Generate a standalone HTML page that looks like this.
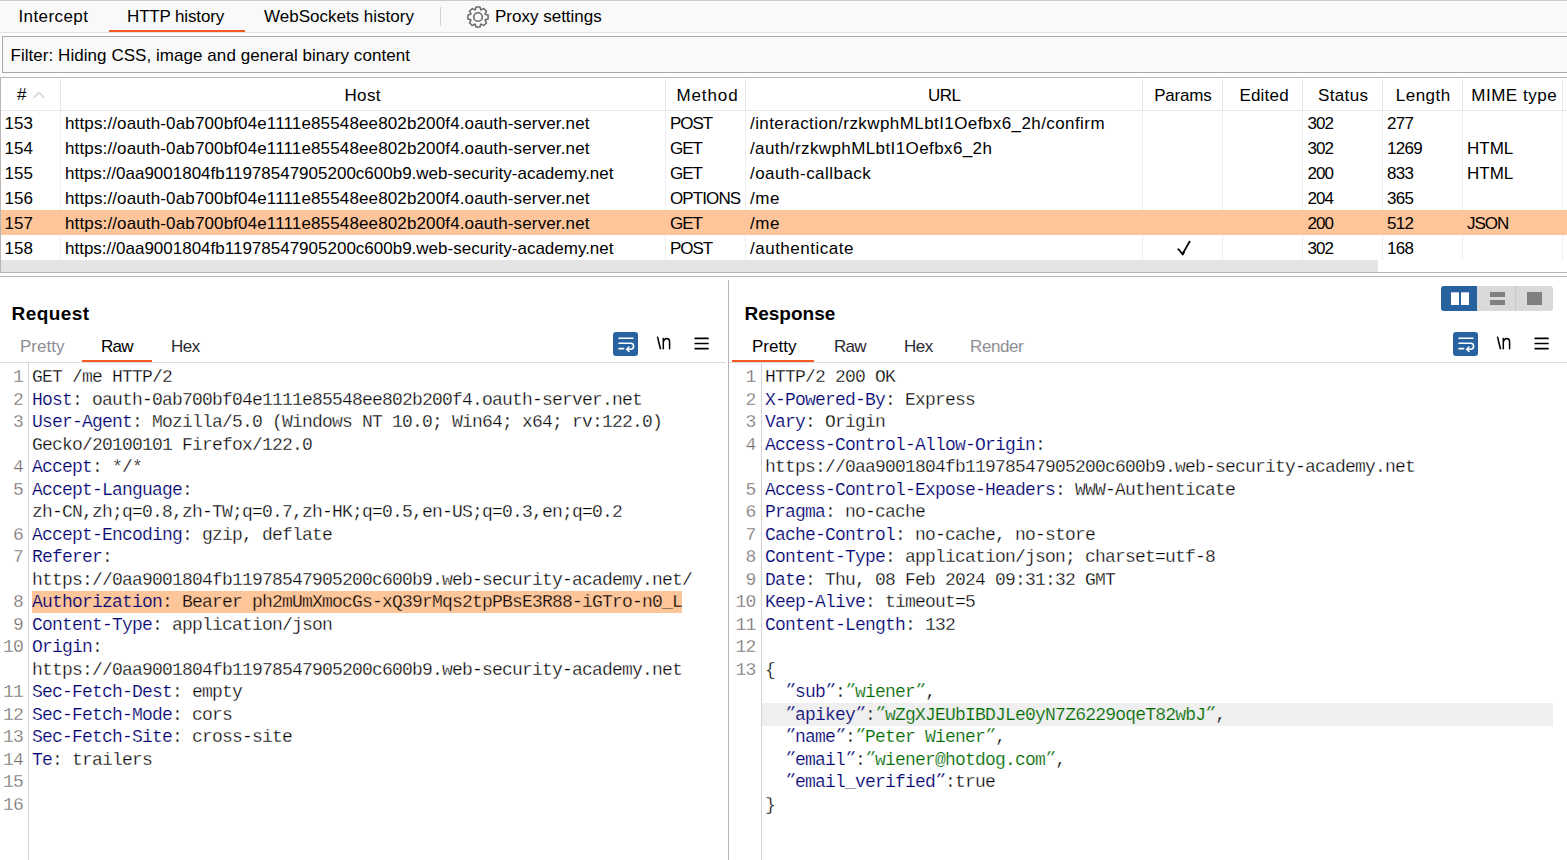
<!DOCTYPE html>
<html><head><meta charset="utf-8"><style>
*{margin:0;padding:0;box-sizing:border-box}
html,body{width:1567px;height:860px;overflow:hidden;background:#fff}
body{position:relative;font-family:"Liberation Sans",sans-serif;font-size:17px;color:#000}
.a{position:absolute;white-space:pre}
.c{position:absolute;white-space:pre;line-height:25px;height:25px}
.hl{position:absolute;background:#b9b5b5}
.vd{position:absolute;width:1px;background:#efefef}
.code{position:absolute;font-family:"Liberation Mono",monospace;font-size:18px;letter-spacing:-0.8px;line-height:22.5px;white-space:pre;color:#000;-webkit-text-stroke:0.3px #fff}
.ln{position:absolute;font-family:"Liberation Mono",monospace;font-size:18px;letter-spacing:-0.8px;-webkit-text-stroke:0.3px #fff;line-height:22.5px;white-space:pre;color:#6f6a6a;text-align:right}
.k{color:#000070;-webkit-text-stroke-width:0.2px}
.g{color:#006a00;-webkit-text-stroke-width:0.2px}
.q{font-style:normal;display:inline-block;transform:translateY(-1.5px) skewX(-28deg) scaleY(0.75);transform-origin:50% 30%}
</style></head><body>
<div class="a" style="left:0;top:0;width:1567px;height:33px;background:#f9f9f9;border-top:1px solid #c9cccc;border-bottom:1px solid #e2e2e2"></div>
<div class="a" style="left:18.5px;top:1px;line-height:31px;letter-spacing:0.4px">Intercept</div>
<div class="a" style="left:127px;top:1px;line-height:31px;letter-spacing:-0.15px">HTTP history</div>
<div class="a" style="left:108.5px;top:30px;width:136px;height:2px;background:#f85a26"></div>
<div class="a" style="left:264px;top:1px;line-height:31px">WebSockets history</div>
<div class="a" style="left:440px;top:7px;width:1px;height:19px;background:#d4d4d4"></div>
<svg class="a" style="left:465.75px;top:5px" width="24" height="24" viewBox="0 0 24 24"><path d="M9.24,4.81 L10.03,1.89 L13.97,1.89 L14.76,4.81 L15.13,4.97 L17.76,3.46 L20.54,6.24 L19.03,8.87 L19.19,9.24 L22.11,10.03 L22.11,13.97 L19.19,14.76 L19.03,15.13 L20.54,17.76 L17.76,20.54 L15.13,19.03 L14.76,19.19 L13.97,22.11 L10.03,22.11 L9.24,19.19 L8.87,19.03 L6.24,20.54 L3.46,17.76 L4.97,15.13 L4.81,14.76 L1.89,13.97 L1.89,10.03 L4.81,9.24 L4.97,8.87 L3.46,6.24 L6.24,3.46 L8.87,4.97 Z" fill="none" stroke="#6b6b6b" stroke-width="1.5" stroke-linejoin="round"/><circle cx="12" cy="12" r="4.3" fill="none" stroke="#6b6b6b" stroke-width="1.6"/></svg>
<div class="a" style="left:495px;top:1px;line-height:31px">Proxy settings</div>
<div class="a" style="left:0;top:33px;width:1567px;height:44px;background:#fcfcfc"></div>
<div class="a" style="left:2px;top:36px;width:1580px;height:37px;background:#f9f9f9;border:1px solid #a8a8a8"></div>
<div class="a" style="left:10.5px;top:38px;line-height:35px;letter-spacing:0.05px">Filter: Hiding CSS, image and general binary content</div>
<div class="hl" style="left:0;top:77px;width:1567px;height:1px"></div>
<div class="a" style="left:0;top:78px;width:1567px;height:194px;background:#fff"></div>
<div class="hl" style="left:0;top:77px;width:1px;height:196px"></div>
<div class="vd" style="left:60px;top:79px;height:31px;background:#e6e6e6"></div>
<div class="vd" style="left:665px;top:79px;height:31px;background:#e6e6e6"></div>
<div class="vd" style="left:745px;top:79px;height:31px;background:#e6e6e6"></div>
<div class="vd" style="left:1142px;top:79px;height:31px;background:#e6e6e6"></div>
<div class="vd" style="left:1222px;top:79px;height:31px;background:#e6e6e6"></div>
<div class="vd" style="left:1302px;top:79px;height:31px;background:#e6e6e6"></div>
<div class="vd" style="left:1382px;top:79px;height:31px;background:#e6e6e6"></div>
<div class="vd" style="left:1462px;top:79px;height:31px;background:#e6e6e6"></div>
<div class="vd" style="left:1562px;top:79px;height:31px;background:#e6e6e6"></div>
<div class="a" style="left:1px;top:110px;width:1566px;height:1px;background:#e6e6e6"></div>
<div class="a" style="left:17px;top:79px;line-height:32px">#</div>
<svg class="a" style="left:32px;top:90px" width="14" height="10" viewBox="0 0 14 10"><path d="M1.5,8 L7,2.5 L12.5,8" fill="none" stroke="#a8a8a8" stroke-width="1"/></svg>
<div class="a" style="left:60px;top:80px;width:605px;line-height:32px;text-align:center;letter-spacing:0.4px;text-indent:0.4px">Host</div>
<div class="a" style="left:667px;top:80px;width:80px;line-height:32px;text-align:center;letter-spacing:0.9px;text-indent:0.9px">Method</div>
<div class="a" style="left:746px;top:80px;width:397px;line-height:32px;text-align:center;letter-spacing:-0.5px;text-indent:-0.5px">URL</div>
<div class="a" style="left:1143px;top:80px;width:80px;line-height:32px;text-align:center;letter-spacing:-0.2px;text-indent:-0.2px">Params</div>
<div class="a" style="left:1224px;top:80px;width:80px;line-height:32px;text-align:center;letter-spacing:0.2px;text-indent:0.2px">Edited</div>
<div class="a" style="left:1303px;top:80px;width:80px;line-height:32px;text-align:center;letter-spacing:0.35px;text-indent:0.35px">Status</div>
<div class="a" style="left:1383px;top:80px;width:80px;line-height:32px;text-align:center;letter-spacing:0.5px;text-indent:0.5px">Length</div>
<div class="a" style="left:1464px;top:80px;width:100px;line-height:32px;text-align:center;letter-spacing:0.55px;text-indent:0.55px">MIME type</div>
<div class="vd" style="left:60px;top:111px;height:149px"></div>
<div class="vd" style="left:665px;top:111px;height:149px"></div>
<div class="vd" style="left:745px;top:111px;height:149px"></div>
<div class="vd" style="left:1142px;top:111px;height:149px"></div>
<div class="vd" style="left:1222px;top:111px;height:149px"></div>
<div class="vd" style="left:1302px;top:111px;height:149px"></div>
<div class="vd" style="left:1382px;top:111px;height:149px"></div>
<div class="vd" style="left:1462px;top:111px;height:149px"></div>
<div class="vd" style="left:1562px;top:111px;height:149px"></div>
<div class="a" style="left:1px;top:210px;width:1566px;height:25px;background:#fec49a"></div>
<div class="c" style="left:4.5px;top:111px;letter-spacing:0px">153</div>
<div class="c" style="left:65px;top:111px;letter-spacing:0.135px">https://oauth-0ab700bf04e1111e85548ee802b200f4.oauth-server.net</div>
<div class="c" style="left:670px;top:111px;letter-spacing:-1.07px">POST</div>
<div class="c" style="left:750px;top:111px;letter-spacing:0.42px">/interaction/rzkwphMLbtI1Oefbx6_2h/confirm</div>
<div class="c" style="left:1307.5px;top:111px;letter-spacing:-1.0px">302</div>
<div class="c" style="left:1387px;top:111px;letter-spacing:-0.7px">277</div>
<div class="c" style="left:4.5px;top:136px;letter-spacing:0px">154</div>
<div class="c" style="left:65px;top:136px;letter-spacing:0.135px">https://oauth-0ab700bf04e1111e85548ee802b200f4.oauth-server.net</div>
<div class="c" style="left:670px;top:136px;letter-spacing:-1.05px">GET</div>
<div class="c" style="left:750px;top:136px;letter-spacing:0.4px">/auth/rzkwphMLbtI1Oefbx6_2h</div>
<div class="c" style="left:1307.5px;top:136px;letter-spacing:-1.0px">302</div>
<div class="c" style="left:1387px;top:136px;letter-spacing:-0.7px">1269</div>
<div class="c" style="left:1467px;top:136px;letter-spacing:0px">HTML</div>
<div class="c" style="left:4.5px;top:161px;letter-spacing:0px">155</div>
<div class="c" style="left:65px;top:161px;letter-spacing:0px">https://0aa9001804fb11978547905200c600b9.web-security-academy.net</div>
<div class="c" style="left:670px;top:161px;letter-spacing:-1.05px">GET</div>
<div class="c" style="left:750px;top:161px;letter-spacing:0.46px">/oauth-callback</div>
<div class="c" style="left:1307.5px;top:161px;letter-spacing:-1.0px">200</div>
<div class="c" style="left:1387px;top:161px;letter-spacing:-0.7px">833</div>
<div class="c" style="left:1467px;top:161px;letter-spacing:0px">HTML</div>
<div class="c" style="left:4.5px;top:186px;letter-spacing:0px">156</div>
<div class="c" style="left:65px;top:186px;letter-spacing:0.135px">https://oauth-0ab700bf04e1111e85548ee802b200f4.oauth-server.net</div>
<div class="c" style="left:670px;top:186px;letter-spacing:-0.9px">OPTIONS</div>
<div class="c" style="left:750px;top:186px;letter-spacing:0.6px">/me</div>
<div class="c" style="left:1307.5px;top:186px;letter-spacing:-1.0px">204</div>
<div class="c" style="left:1387px;top:186px;letter-spacing:-0.7px">365</div>
<div class="c" style="left:4.5px;top:211px;letter-spacing:0px">157</div>
<div class="c" style="left:65px;top:211px;letter-spacing:0.135px">https://oauth-0ab700bf04e1111e85548ee802b200f4.oauth-server.net</div>
<div class="c" style="left:670px;top:211px;letter-spacing:-1.05px">GET</div>
<div class="c" style="left:750px;top:211px;letter-spacing:0.6px">/me</div>
<div class="c" style="left:1307.5px;top:211px;letter-spacing:-1.0px">200</div>
<div class="c" style="left:1387px;top:211px;letter-spacing:-0.7px">512</div>
<div class="c" style="left:1467px;top:211px;letter-spacing:-1.0px">JSON</div>
<div class="c" style="left:4.5px;top:236px;letter-spacing:0px">158</div>
<div class="c" style="left:65px;top:236px;letter-spacing:0px">https://0aa9001804fb11978547905200c600b9.web-security-academy.net</div>
<div class="c" style="left:670px;top:236px;letter-spacing:-1.07px">POST</div>
<div class="c" style="left:750px;top:236px;letter-spacing:0.5px">/authenticate</div>
<svg class="a" style="left:1174px;top:238px" width="20" height="20" viewBox="0 0 20 20"><path d="M3.5,11.5 L4.5,11.2 L8.5,16 L16,3" fill="none" stroke="#000" stroke-width="1.7" stroke-linejoin="round"/><path d="M7,14.5 L8.8,16.5 L10.3,14" fill="none" stroke="#000" stroke-width="1.6"/></svg>
<div class="c" style="left:1307.5px;top:236px;letter-spacing:-1.0px">302</div>
<div class="c" style="left:1387px;top:236px;letter-spacing:-0.7px">168</div>
<div class="a" style="left:1px;top:260px;width:1377px;height:12px;background:#e4e4e4"></div>
<div class="hl" style="left:0;top:272px;width:1567px;height:1px"></div>
<div class="hl" style="left:0;top:276px;width:1567px;height:1px"></div>
<div class="hl" style="left:728px;top:280px;width:1px;height:580px"></div>
<div class="a" style="left:11.5px;top:304px;font-weight:bold;font-size:19px;line-height:20px;letter-spacing:0.45px">Request</div>
<div class="a" style="left:20px;top:337px;line-height:20px;color:#8e8e94;letter-spacing:0px">Pretty</div>
<div class="a" style="left:101px;top:337px;line-height:20px;color:#000;letter-spacing:-0.8px">Raw</div>
<div class="a" style="left:171px;top:337px;line-height:20px;color:#2a2a33;letter-spacing:-0.5px">Hex</div>
<div class="a" style="left:82px;top:360px;width:70px;height:2px;background:#f85a26"></div>
<div class="a" style="left:0px;top:362px;width:726px;height:1px;background:#dcdcdc"></div>
<div class="a" style="left:28px;top:363px;width:1px;height:497px;background:#d4d4d4"></div>
<svg class="a" style="left:613px;top:332px" width="25" height="24" viewBox="0 0 25 24"><rect x="0" y="0" width="25" height="24" rx="3" fill="#2862a0"/><path d="M6,6.2 H20" stroke="#fff" stroke-width="1.6" stroke-linecap="round"/><path d="M6,11.3 H17.6 A3,3 0 0 1 17.6,17.3 H14.2" fill="none" stroke="#fff" stroke-width="1.6" stroke-linecap="round"/><path d="M16,15.1 L13.6,17.3 L16,19.5" fill="none" stroke="#fff" stroke-width="1.5" stroke-linecap="round" stroke-linejoin="round"/><path d="M6,16.6 H10.6" stroke="#fff" stroke-width="1.6" stroke-linecap="round"/></svg>
<svg class="a" style="left:656px;top:335px" width="17" height="16" viewBox="0 0 17 16"><path d="M1.6,2.2 L4.4,13.8" stroke="#000" stroke-width="1.5" stroke-linecap="round"/><path d="M7.3,13.8 V3.6 M7.3,6.8 Q8.3,3.4 10.7,3.4 Q13.6,3.4 13.6,6.8 V13.8" fill="none" stroke="#000" stroke-width="1.5" stroke-linecap="round"/></svg>
<svg class="a" style="left:694px;top:336px" width="15" height="15" viewBox="0 0 15 15"><path d="M1.2,2.4 H14 M1.2,7.5 H14 M1.2,12.6 H14" stroke="#000" stroke-width="1.7" stroke-linecap="round"/></svg>
<div class="a" style="left:744.5px;top:304px;font-weight:bold;font-size:19px;line-height:20px;letter-spacing:0px">Response</div>
<div class="a" style="left:752px;top:337px;line-height:20px;color:#000;letter-spacing:0px">Pretty</div>
<div class="a" style="left:834px;top:337px;line-height:20px;color:#2a2a33;letter-spacing:-0.8px">Raw</div>
<div class="a" style="left:904px;top:337px;line-height:20px;color:#2a2a33;letter-spacing:-0.5px">Hex</div>
<div class="a" style="left:970px;top:337px;line-height:20px;color:#8e8e94;letter-spacing:-0.4px">Render</div>
<div class="a" style="left:732px;top:360px;width:82px;height:2px;background:#f85a26"></div>
<div class="a" style="left:729px;top:362px;width:838px;height:1px;background:#dcdcdc"></div>
<div class="a" style="left:761px;top:363px;width:1px;height:497px;background:#d4d4d4"></div>
<svg class="a" style="left:1453px;top:332px" width="25" height="24" viewBox="0 0 25 24"><rect x="0" y="0" width="25" height="24" rx="3" fill="#2862a0"/><path d="M6,6.2 H20" stroke="#fff" stroke-width="1.6" stroke-linecap="round"/><path d="M6,11.3 H17.6 A3,3 0 0 1 17.6,17.3 H14.2" fill="none" stroke="#fff" stroke-width="1.6" stroke-linecap="round"/><path d="M16,15.1 L13.6,17.3 L16,19.5" fill="none" stroke="#fff" stroke-width="1.5" stroke-linecap="round" stroke-linejoin="round"/><path d="M6,16.6 H10.6" stroke="#fff" stroke-width="1.6" stroke-linecap="round"/></svg>
<svg class="a" style="left:1496px;top:335px" width="17" height="16" viewBox="0 0 17 16"><path d="M1.6,2.2 L4.4,13.8" stroke="#000" stroke-width="1.5" stroke-linecap="round"/><path d="M7.3,13.8 V3.6 M7.3,6.8 Q8.3,3.4 10.7,3.4 Q13.6,3.4 13.6,6.8 V13.8" fill="none" stroke="#000" stroke-width="1.5" stroke-linecap="round"/></svg>
<svg class="a" style="left:1534px;top:336px" width="15" height="15" viewBox="0 0 15 15"><path d="M1.2,2.4 H14 M1.2,7.5 H14 M1.2,12.6 H14" stroke="#000" stroke-width="1.7" stroke-linecap="round"/></svg>
<div class="a" style="left:1441px;top:286px;width:112px;height:25px;background:#d9d9d9;border-radius:3px;overflow:hidden"><div class="a" style="left:0;top:0;width:36px;height:25px;background:#28629e"></div><div class="a" style="left:74px;top:0;width:1px;height:25px;background:#c8c8c8"></div><div class="a" style="left:10px;top:6px;width:8px;height:13px;background:#fff;border-top:1px solid #c9c3e6"></div><div class="a" style="left:20px;top:6px;width:8px;height:13px;background:#fff;border-top:1px solid #c9c3e6"></div><div class="a" style="left:49px;top:6px;width:15px;height:5px;background:#808080"></div><div class="a" style="left:49px;top:14px;width:15px;height:5px;background:#808080"></div><div class="a" style="left:86px;top:6px;width:15px;height:13px;background:#808080"></div></div>
<div class="ln" style="left:-17px;width:40px;top:366.3px">1</div>
<div class="code" style="left:32px;top:366.3px">GET /me HTTP/2</div>
<div class="ln" style="left:-17px;width:40px;top:388.8px">2</div>
<div class="code" style="left:32px;top:388.8px"><span class="k">Host</span>: oauth-0ab700bf04e1111e85548ee802b200f4.oauth-server.net</div>
<div class="ln" style="left:-17px;width:40px;top:411.3px">3</div>
<div class="code" style="left:32px;top:411.3px"><span class="k">User-Agent</span>: Mozilla/5.0 (Windows NT 10.0; Win64; x64; rv:122.0)</div>
<div class="code" style="left:32px;top:433.8px">Gecko/20100101 Firefox/122.0</div>
<div class="ln" style="left:-17px;width:40px;top:456.3px">4</div>
<div class="code" style="left:32px;top:456.3px"><span class="k">Accept</span>: */*</div>
<div class="ln" style="left:-17px;width:40px;top:478.8px">5</div>
<div class="code" style="left:32px;top:478.8px"><span class="k">Accept-Language</span>:</div>
<div class="code" style="left:32px;top:501.3px">zh-CN,zh;q=0.8,zh-TW;q=0.7,zh-HK;q=0.5,en-US;q=0.3,en;q=0.2</div>
<div class="ln" style="left:-17px;width:40px;top:523.8px">6</div>
<div class="code" style="left:32px;top:523.8px"><span class="k">Accept-Encoding</span>: gzip, deflate</div>
<div class="ln" style="left:-17px;width:40px;top:546.3px">7</div>
<div class="code" style="left:32px;top:546.3px"><span class="k">Referer</span>:</div>
<div class="code" style="left:32px;top:568.8px">https://0aa9001804fb11978547905200c600b9.web-security-academy.net/</div>
<div class="a" style="left:32px;top:590.5px;width:650px;height:22.5px;background:#fcc59a"></div>
<div class="ln" style="left:-17px;width:40px;top:591.3px">8</div>
<div class="code" style="left:32px;top:591.3px;-webkit-text-stroke-color:#fcc59a"><span class="k">Authorization</span>: Bearer ph2mUmXmocGs-xQ39rMqs2tpPBsE3R88-iGTro-n0_L</div>
<div class="ln" style="left:-17px;width:40px;top:613.8px">9</div>
<div class="code" style="left:32px;top:613.8px"><span class="k">Content-Type</span>: application/json</div>
<div class="ln" style="left:-17px;width:40px;top:636.3px">10</div>
<div class="code" style="left:32px;top:636.3px"><span class="k">Origin</span>:</div>
<div class="code" style="left:32px;top:658.8px">https://0aa9001804fb11978547905200c600b9.web-security-academy.net</div>
<div class="ln" style="left:-17px;width:40px;top:681.3px">11</div>
<div class="code" style="left:32px;top:681.3px"><span class="k">Sec-Fetch-Dest</span>: empty</div>
<div class="ln" style="left:-17px;width:40px;top:703.8px">12</div>
<div class="code" style="left:32px;top:703.8px"><span class="k">Sec-Fetch-Mode</span>: cors</div>
<div class="ln" style="left:-17px;width:40px;top:726.3px">13</div>
<div class="code" style="left:32px;top:726.3px"><span class="k">Sec-Fetch-Site</span>: cross-site</div>
<div class="ln" style="left:-17px;width:40px;top:748.8px">14</div>
<div class="code" style="left:32px;top:748.8px"><span class="k">Te</span>: trailers</div>
<div class="ln" style="left:-17px;width:40px;top:771.3px">15</div>
<div class="ln" style="left:-17px;width:40px;top:793.8px">16</div>
<div class="ln" style="left:715.5px;width:40px;top:366.3px">1</div>
<div class="code" style="left:765px;top:366.3px">HTTP/2 200 OK</div>
<div class="ln" style="left:715.5px;width:40px;top:388.8px">2</div>
<div class="code" style="left:765px;top:388.8px"><span class="k">X-Powered-By</span>: Express</div>
<div class="ln" style="left:715.5px;width:40px;top:411.3px">3</div>
<div class="code" style="left:765px;top:411.3px"><span class="k">Vary</span>: Origin</div>
<div class="ln" style="left:715.5px;width:40px;top:433.8px">4</div>
<div class="code" style="left:765px;top:433.8px"><span class="k">Access-Control-Allow-Origin</span>:</div>
<div class="code" style="left:765px;top:456.3px">https://0aa9001804fb11978547905200c600b9.web-security-academy.net</div>
<div class="ln" style="left:715.5px;width:40px;top:478.8px">5</div>
<div class="code" style="left:765px;top:478.8px"><span class="k">Access-Control-Expose-Headers</span>: WWW-Authenticate</div>
<div class="ln" style="left:715.5px;width:40px;top:501.3px">6</div>
<div class="code" style="left:765px;top:501.3px"><span class="k">Pragma</span>: no-cache</div>
<div class="ln" style="left:715.5px;width:40px;top:523.8px">7</div>
<div class="code" style="left:765px;top:523.8px"><span class="k">Cache-Control</span>: no-cache, no-store</div>
<div class="ln" style="left:715.5px;width:40px;top:546.3px">8</div>
<div class="code" style="left:765px;top:546.3px"><span class="k">Content-Type</span>: application/json; charset=utf-8</div>
<div class="ln" style="left:715.5px;width:40px;top:568.8px">9</div>
<div class="code" style="left:765px;top:568.8px"><span class="k">Date</span>: Thu, 08 Feb 2024 09:31:32 GMT</div>
<div class="ln" style="left:715.5px;width:40px;top:591.3px">10</div>
<div class="code" style="left:765px;top:591.3px"><span class="k">Keep-Alive</span>: timeout=5</div>
<div class="ln" style="left:715.5px;width:40px;top:613.8px">11</div>
<div class="code" style="left:765px;top:613.8px"><span class="k">Content-Length</span>: 132</div>
<div class="ln" style="left:715.5px;width:40px;top:636.3px">12</div>
<div class="ln" style="left:715.5px;width:40px;top:658.8px">13</div>
<div class="code" style="left:765px;top:658.8px">{</div>
<div class="code" style="left:765px;top:681.3px">  <span class="k"><i class="q">&quot;</i>sub<i class="q">&quot;</i></span>:<span class="g"><i class="q">&quot;</i>wiener<i class="q">&quot;</i></span>,</div>
<div class="a" style="left:762px;top:703.0px;width:791px;height:22.5px;background:#efefef"></div>
<div class="code" style="left:765px;top:703.8px;-webkit-text-stroke-color:#efefef">  <span class="k"><i class="q">&quot;</i>apikey<i class="q">&quot;</i></span>:<span class="g"><i class="q">&quot;</i>wZgXJEUbIBDJLe0yN7Z6229oqeT82wbJ<i class="q">&quot;</i></span>,</div>
<div class="code" style="left:765px;top:726.3px">  <span class="k"><i class="q">&quot;</i>name<i class="q">&quot;</i></span>:<span class="g"><i class="q">&quot;</i>Peter Wiener<i class="q">&quot;</i></span>,</div>
<div class="code" style="left:765px;top:748.8px">  <span class="k"><i class="q">&quot;</i>email<i class="q">&quot;</i></span>:<span class="g"><i class="q">&quot;</i>wiener@hotdog.com<i class="q">&quot;</i></span>,</div>
<div class="code" style="left:765px;top:771.3px">  <span class="k"><i class="q">&quot;</i>email_verified<i class="q">&quot;</i></span>:true</div>
<div class="code" style="left:765px;top:793.8px">}</div>
</body></html>
